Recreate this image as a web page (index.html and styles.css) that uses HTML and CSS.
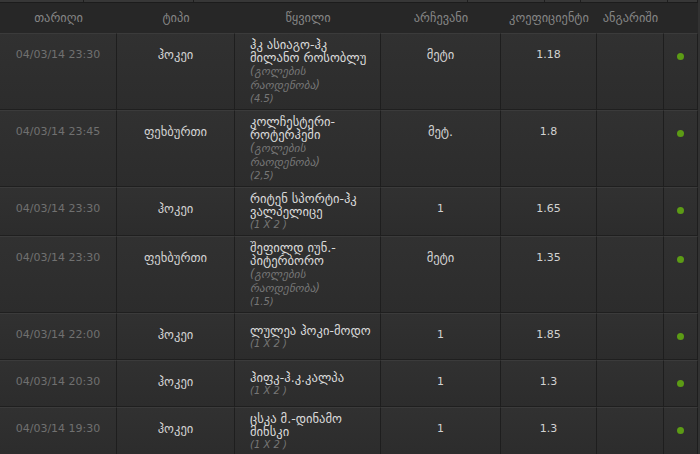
FILE: index.html
```html
<!DOCTYPE html>
<html lang="ka">
<head>
<meta charset="utf-8">
<title>ფსონები</title>
<link rel="stylesheet" href="styles.css">
</head>
<body>
<div class="board">
  <div class="strip">
    <span class="seg seg1"></span><span class="seg seg2"></span><span class="seg seg3"></span><span class="seg seg4"></span><span class="seg seg5"></span><span class="seg seg6"></span><span class="seg seg7"></span>
  </div>
  <div class="cols head">
    <div class="h">თარიღი</div>
    <div class="h">ტიპი</div>
    <div class="h">წყვილი</div>
    <div class="h">არჩევანი</div>
    <div class="h">კოეფიციენტი</div>
    <div class="h">ანგარიში</div>
    <div class="h"></div>
  </div>

  <div class="cols row">
    <div class="c date">04/03/14 23:30</div>
    <div class="c mid ka">ჰოკეი</div>
    <div class="c match"><div class="name">ჰკ ასიაგო-ჰკ მილანო როსობლუ</div><div class="market"><em>(გოლების რაოდენობა)</em><em class="val">(4.5)</em></div></div>
    <div class="c mid ka">მეტი</div>
    <div class="c mid">1.18</div>
    <div class="c"></div>
    <div class="c dotcell"><span class="dot"></span></div>
  </div>

  <div class="cols row">
    <div class="c date">04/03/14 23:45</div>
    <div class="c mid ka">ფეხბურთი</div>
    <div class="c match"><div class="name">კოლჩესტერი-როტერჰემი</div><div class="market"><em>(გოლების რაოდენობა)</em><em class="val">(2,5)</em></div></div>
    <div class="c mid ka">მეტ.</div>
    <div class="c mid">1.8</div>
    <div class="c"></div>
    <div class="c dotcell"><span class="dot"></span></div>
  </div>

  <div class="cols row">
    <div class="c date">04/03/14 23:30</div>
    <div class="c mid ka">ჰოკეი</div>
    <div class="c match"><div class="name">რიტენ სპორტი-ჰკ ვალპელიცე</div><div class="market"><em class="val">(1 X 2 )</em></div></div>
    <div class="c mid">1</div>
    <div class="c mid">1.65</div>
    <div class="c"></div>
    <div class="c dotcell"><span class="dot"></span></div>
  </div>

  <div class="cols row">
    <div class="c date">04/03/14 23:30</div>
    <div class="c mid ka">ფეხბურთი</div>
    <div class="c match"><div class="name">შეფილდ იუნ.-პიტერბორო</div><div class="market"><em>(გოლების რაოდენობა)</em><em class="val">(1.5)</em></div></div>
    <div class="c mid ka">მეტი</div>
    <div class="c mid">1.35</div>
    <div class="c"></div>
    <div class="c dotcell"><span class="dot"></span></div>
  </div>

  <div class="cols row">
    <div class="c date">04/03/14 22:00</div>
    <div class="c mid ka">ჰოკეი</div>
    <div class="c match"><div class="name">ლულეა ჰოკი-მოდო</div><div class="market"><em class="val">(1 X 2 )</em></div></div>
    <div class="c mid">1</div>
    <div class="c mid">1.85</div>
    <div class="c"></div>
    <div class="c dotcell"><span class="dot"></span></div>
  </div>

  <div class="cols row">
    <div class="c date">04/03/14 20:30</div>
    <div class="c mid ka">ჰოკეი</div>
    <div class="c match"><div class="name">ჰიფკ-ჰ.კ.კალპა</div><div class="market"><em class="val">(1 X 2 )</em></div></div>
    <div class="c mid">1</div>
    <div class="c mid">1.3</div>
    <div class="c"></div>
    <div class="c dotcell"><span class="dot"></span></div>
  </div>

  <div class="cols row">
    <div class="c date">04/03/14 19:30</div>
    <div class="c mid ka">ჰოკეი</div>
    <div class="c match"><div class="name">ცსკა მ.-დინამო მინსკი</div><div class="market"><em class="val">(1 X 2 )</em></div></div>
    <div class="c mid">1</div>
    <div class="c mid">1.3</div>
    <div class="c"></div>
    <div class="c dotcell"><span class="dot"></span></div>
  </div>
</div>
</body>
</html>
```

FILE: styles.css
```css
html, body {
  margin: 0;
  padding: 0;
  background: #323232;
}
body {
  font-family: "DejaVu Sans", "Noto Sans", sans-serif;
  font-size: 11px;
  color: #d6d6d6;
}
.board {
  width: 698px;
  background: #2e2e2e;
}
.strip {
  display: flex;
  height: 2px;
  background: #373737;
  border-bottom: 1px solid #1c1c1c;
}
.seg {
  border-right: 1px solid #1e1e1e;
  height: 2px;
}
.seg1 { width: 83px; }
.seg2 { width: 109px; }
.seg3 { width: 274px; }
.seg4 { width: 76px; }
.seg5 { width: 35px; }
.seg6 { width: 86px; }
.seg7 { width: 29px; }

.cols {
  display: grid;
  grid-template-columns: 117px 118px 146px 120px 96px 67px 34px;
}
.head {
  height: 30px;
  background: #272727;
}
.h {
  text-align: center;
  line-height: 30px;
  font-size: 12.4px;
  color: #858585;
}
.row {
  min-height: 47px;
  background: linear-gradient(#313131, #2c2c2c);
}
.c {
  border-top: 1px solid #3b3b3b;
  border-bottom: 1px solid #1f1f1f;
  border-right: 1px solid #1e1e1e;
  padding-top: 14px;
  line-height: 13px;
}
.ka {
  font-size: 12.6px;
}
.date {
  text-align: center;
  color: #707070;
}
.mid {
  text-align: center;
  color: #d2d2d2;
}
.match {
  padding: 4px 8px 4px 15px;
  color: #dadada;
  font-size: 12.6px;
  display: flex;
  flex-direction: column;
  justify-content: center;
}
.market em {
  font-size: 11.4px;
  color: #767676;
}
.market .val {
  display: block;
  font-size: 10px;
}
.dotcell {
  padding-top: 19px;
  display: flex;
  justify-content: center;
  align-items: flex-start;
}
.dot {
  width: 7px;
  height: 7px;
  border-radius: 50%;
  background: #5c9b15;
}
```
